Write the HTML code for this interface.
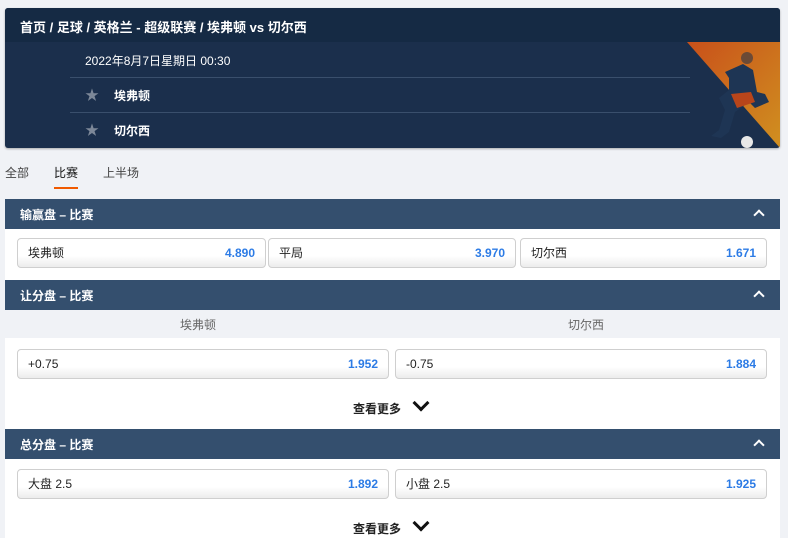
<!DOCTYPE html><html><head><meta charset="utf-8"><style>
*{margin:0;padding:0;box-sizing:border-box}
body{width:788px;height:538px;overflow:hidden;background:#f0f2f6;font-family:"Liberation Sans","Noto Sans CJK SC",sans-serif;position:relative}
.a{position:absolute}
.hdr{left:5px;top:8px;width:775px;height:140px;background:#1b2f4c;border-radius:3px;overflow:hidden;box-shadow:0 1px 2px rgba(0,0,0,.3)}
.bc{left:0;top:0;width:775px;height:34px;background:#152a44;color:#fff;font-size:13px;font-weight:bold;padding:9px 15px}
.line{height:1px;background:#3a4f6c;left:65px;width:620px}
.ht{color:#fff;font-size:12px}
.star{color:#7d8898;font-size:14px}
.sec{left:5px;width:775px;height:30px;background:#344f6e;color:#fff;font-size:12px;font-weight:bold;padding:7px 15px}
.chev{position:absolute;right:17px;top:12px;width:8px;height:8px;border-left:2.5px solid #fff;border-top:2.5px solid #fff;transform:rotate(45deg)}
.wh{background:#fff;left:5px;width:775px}
.btn{position:absolute;height:30px;border:1px solid #cfcfcf;border-radius:4px;background:linear-gradient(#fff 60%,#ececec);font-size:12px;color:#222;padding:0 10px;display:flex;align-items:center;justify-content:space-between;line-height:1}
.btn b{color:#2c7be5;font-weight:bold}
.more{font-size:12px;font-weight:bold;color:#222}
.dn{display:inline-block;width:12px;height:12px;border-right:3px solid #111;border-bottom:3px solid #111;transform:rotate(45deg);margin-left:14px;position:relative;top:-4px}
</style></head><body>
<div class="a hdr">
<div class="a bc">首页 / 足球 / 英格兰 - 超级联赛 / 埃弗顿 vs 切尔西</div>
<div class="a ht" style="left:80px;top:44px">2022年8月7日星期日 00:30</div>
<div class="a line" style="top:69px"></div>
<div class="a star" style="left:80px;top:77px">★</div><div class="a ht" style="left:109px;top:79px;font-weight:bold">埃弗顿</div>
<div class="a line" style="top:104px"></div>
<div class="a star" style="left:80px;top:112px">★</div><div class="a ht" style="left:109px;top:114px;font-weight:bold">切尔西</div>
<svg class="a" style="left:680px;top:34px" width="95" height="106" viewBox="0 0 95 106"><defs><linearGradient id="g" x1="0" y1="0" x2="1" y2="1"><stop offset="0" stop-color="#c9501a"/><stop offset="1" stop-color="#d09020"/></linearGradient></defs><polygon points="2,0 95,0 95,106" fill="url(#g)"/><path d="M40 30 L58 22 L68 28 L72 50 L80 52 L84 60 L70 66 L64 60 L50 70 L44 90 L36 96 L26 94 L34 88 L40 68 L34 56 L44 48 L44 36Z" fill="#1e3554"/><path d="M46 52 L66 50 L70 60 L52 66Z" fill="#b8451a"/><circle cx="62" cy="16" r="6" fill="#6b4a36"/><circle cx="62" cy="100" r="6" fill="#e8e8e8"/></svg>
</div>
<div class="a" style="left:5px;top:164px;font-size:12px;color:#444">全部</div>
<div class="a" style="left:54px;top:164px;font-size:12px;color:#111">比赛</div>
<div class="a" style="left:54px;top:187px;width:24px;height:2px;background:#f05a00"></div>
<div class="a" style="left:103px;top:164px;font-size:12px;color:#444">上半场</div>

<div class="a sec" style="top:199px">输赢盘 – 比赛<span class="chev"></span></div>
<div class="a wh" style="top:229px;height:51px"></div>
<div class="btn" style="left:17px;top:238px;width:249px"><span>埃弗顿</span><b>4.890</b></div>
<div class="btn" style="left:268px;top:238px;width:248px"><span>平局</span><b>3.970</b></div>
<div class="btn" style="left:520px;top:238px;width:247px"><span>切尔西</span><b>1.671</b></div>

<div class="a sec" style="top:280px">让分盘 – 比赛<span class="chev"></span></div>
<div class="a" style="left:180px;top:316px;font-size:12px;color:#666">埃弗顿</div>
<div class="a" style="left:568px;top:316px;font-size:12px;color:#666">切尔西</div>
<div class="a wh" style="top:338px;height:91px"></div>
<div class="btn" style="left:17px;top:349px;width:372px"><span>+0.75</span><b>1.952</b></div>
<div class="btn" style="left:395px;top:349px;width:372px"><span>-0.75</span><b>1.884</b></div>
<div class="a more" style="left:353px;top:400px">查看更多<span class="dn"></span></div>

<div class="a sec" style="top:429px">总分盘 – 比赛<span class="chev"></span></div>
<div class="a wh" style="top:459px;height:79px"></div>
<div class="btn" style="left:17px;top:469px;width:372px"><span>大盘 2.5</span><b>1.892</b></div>
<div class="btn" style="left:395px;top:469px;width:372px"><span>小盘 2.5</span><b>1.925</b></div>
<div class="a more" style="left:353px;top:520px">查看更多<span class="dn"></span></div>
</body></html>
